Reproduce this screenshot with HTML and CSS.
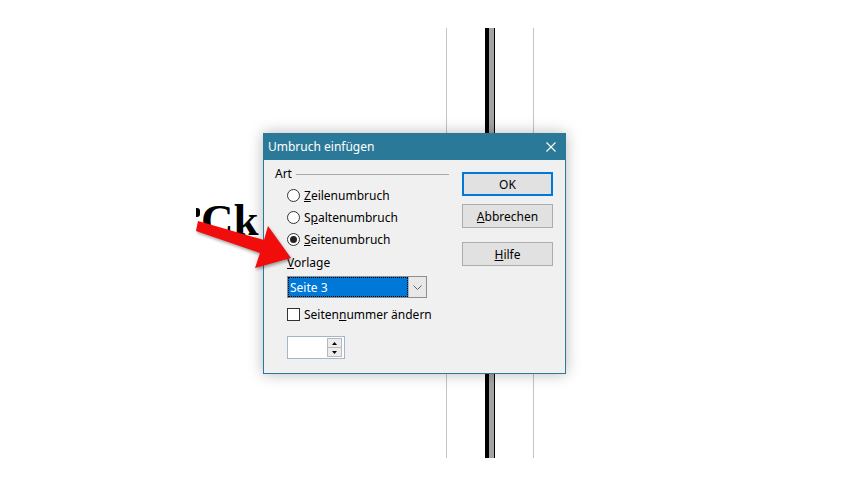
FILE: index.html
```html
<!DOCTYPE html>
<html lang="de">
<head>
<meta charset="utf-8">
<title>Umbruch einfügen</title>
<link rel="stylesheet" href="styles.css">
</head>
<body>
<div class="canvas">
  <div class="vline vline-left"></div>
  <div class="pagebar"></div>
  <div class="vline vline-right"></div>
  <div class="bigtext"><span class="fragment"></span><span class="word">Ck</span></div>

  <div class="dialog">
    <div class="titlebar">
      <span class="title">Umbruch einfügen</span>
      <svg class="close" width="10" height="10" viewBox="0 0 10 10"><path d="M0.5 0.5 L9.5 9.5 M9.5 0.5 L0.5 9.5" stroke="#fff" stroke-width="1.1" fill="none"/></svg>
    </div>
    <div class="body">
      <div class="leftcol">
        <div class="legend"><span>Art</span><div class="legend-line"></div></div>
        <div class="options">
          <div class="radio-row"><span class="radio"></span><span><u>Z</u>eilenumbruch</span></div>
          <div class="radio-row"><span class="radio"></span><span>S<u>p</u>altenumbruch</span></div>
          <div class="radio-row"><span class="radio checked"></span><span><u>S</u>eitenumbruch</span></div>
          <div class="label"><u>V</u>orlage</div>
          <div class="select">
            <div class="select-value"><span>Seite 3</span></div>
            <div class="select-btn">
              <svg width="9" height="5" viewBox="0 0 9 5"><path d="M0.5 0.5 L4.5 4.5 L8.5 0.5" stroke="#606060" stroke-width="1" fill="none"/></svg>
            </div>
          </div>
          <div class="check-row"><span class="checkbox"></span><span>Seiten<u>n</u>ummer ändern</span></div>
          <div class="spin">
            <div class="spin-field"></div>
            <div class="spin-btns">
              <div class="spin-btn"><svg width="5" height="3" viewBox="0 0 5 3"><path d="M0 3 L2.5 0 L5 3 Z" fill="#000"/></svg></div>
              <div class="spin-btn"><svg width="5" height="3" viewBox="0 0 5 3"><path d="M0 0 L2.5 3 L5 0 Z" fill="#000"/></svg></div>
            </div>
          </div>
        </div>
      </div>
      <div class="rightcol">
        <div class="btn btn-default">OK</div>
        <div class="btn btn-cancel"><u>A</u>bbrechen</div>
        <div class="btn btn-help"><u>H</u>ilfe</div>
      </div>
    </div>
  </div>

  <svg class="arrow" width="864" height="486" viewBox="0 0 864 486">
    <polygon points="198,221 264,240 268,226 291,258 255,268 260,253 196,231" fill="#f20d0d"/>
  </svg>
</div>
</body>
</html>
```

FILE: styles.css
```css
html, body {
  margin: 0;
  padding: 0;
  background: #ffffff;
}
.canvas {
  position: relative;
  width: 864px;
  height: 486px;
  overflow: hidden;
  background: #ffffff;
  font-family: "Noto Sans", "Open Sans", sans-serif;
}
.vline {
  position: absolute;
  top: 28px;
  width: 1px;
  height: 430px;
  background: #c4c4c4;
}
.vline-left { left: 446px; }
.vline-right { left: 533px; }
.pagebar {
  position: absolute;
  top: 28px;
  left: 485px;
  width: 4px;
  height: 430px;
  background: #000;
  border-right: 5px solid #a3a3a3;
  box-shadow: 1px 0 0 #000;
}
.bigtext {
  position: absolute;
  left: 196px;
  top: 198px;
  display: flex;
  align-items: flex-start;
}
.fragment {
  width: 4px;
  height: 9px;
  margin-top: 10px;
  margin-right: 1px;
  background: #000;
  border-radius: 0 3px 3px 0;
}
.word {
  font-family: "Liberation Serif", serif;
  font-weight: bold;
  font-size: 45px;
  line-height: 45px;
  color: #000;
  white-space: nowrap;
}
.dialog {
  position: absolute;
  left: 263px;
  top: 133px;
  width: 303px;
  height: 241px;
  box-sizing: border-box;
  border: 1px solid #2b7999;
  background: #f0f0f0;
  box-shadow: 0 0 14px rgba(0, 0, 0, 0.28);
  font-size: 12px;
  color: #000;
}
.titlebar {
  height: 26px;
  background: #2b7999;
  display: flex;
  align-items: center;
  justify-content: space-between;
  padding: 0 9px 0 4px;
}
.title {
  color: #fff;
  font-size: 12px;
  line-height: 26px;
}
.close { display: block; }
.body {
  display: flex;
  padding: 0 12px 0 11px;
  gap: 13px;
}
.leftcol {
  width: 174px;
  padding-top: 6px;
}
.legend {
  display: flex;
  align-items: center;
  height: 16px;
  line-height: 16px;
}
.legend-line {
  flex: 1;
  height: 1px;
  margin-left: 4px;
  background: #a8a8a8;
}
.options {
  padding-left: 12px;
  padding-top: 2px;
}
.radio-row {
  display: flex;
  align-items: center;
  height: 22px;
  gap: 4px;
}
.radio {
  width: 13px;
  height: 13px;
  box-sizing: border-box;
  border: 1px solid #333;
  border-radius: 50%;
  background: #fff;
  display: flex;
  align-items: center;
  justify-content: center;
}
.radio.checked::after {
  content: "";
  width: 7px;
  height: 7px;
  border-radius: 50%;
  background: #222;
}
.label {
  margin-top: 5px;
  height: 16px;
  line-height: 16px;
}
.select {
  margin-top: 5px;
  width: 140px;
  height: 22px;
  box-sizing: border-box;
  border: 1px solid #8e8e8e;
  display: flex;
  background: #fff;
}
.select-value {
  width: 120px;
  background: #0078d7;
  outline: 1px dotted #000;
  outline-offset: -1px;
  color: #fff;
  display: flex;
  align-items: center;
  padding-left: 2px;
  box-sizing: border-box;
}
.select-btn {
  flex: 1;
  background: #e8e8e8;
  border-left: 1px solid #b0b0b0;
  display: flex;
  align-items: center;
  justify-content: center;
}
.check-row {
  margin-top: 8px;
  display: flex;
  align-items: center;
  gap: 4px;
  height: 16px;
}
.checkbox {
  width: 13px;
  height: 13px;
  box-sizing: border-box;
  border: 1px solid #333;
  background: #fff;
}
.spin {
  margin-top: 14px;
  width: 58px;
  height: 23px;
  box-sizing: border-box;
  border: 1px solid #a3b6cf;
  background: #fff;
  display: flex;
  padding: 1px 2px 1px 0;
}
.spin-field { flex: 1; }
.spin-btns {
  width: 15px;
  display: flex;
  flex-direction: column;
}
.spin-btn {
  flex: 1;
  background: #ececec;
  border: 1px solid #b8b8b8;
  display: flex;
  align-items: center;
  justify-content: center;
}
.spin-btn + .spin-btn { border-top: none; }
.rightcol {
  width: 91px;
  padding-top: 12px;
  display: flex;
  flex-direction: column;
}
.btn {
  height: 24px;
  box-sizing: border-box;
  border: 1px solid #adadad;
  background: #e1e1e1;
  display: flex;
  align-items: center;
  justify-content: center;
}
.btn-default { border: 2px solid #0078d7; }
.btn-cancel { margin-top: 8px; }
.btn-help { margin-top: 14px; }
.arrow {
  position: absolute;
  left: 0;
  top: 0;
  filter: drop-shadow(1px 2px 1.5px rgba(0, 0, 0, 0.35));
}
```
